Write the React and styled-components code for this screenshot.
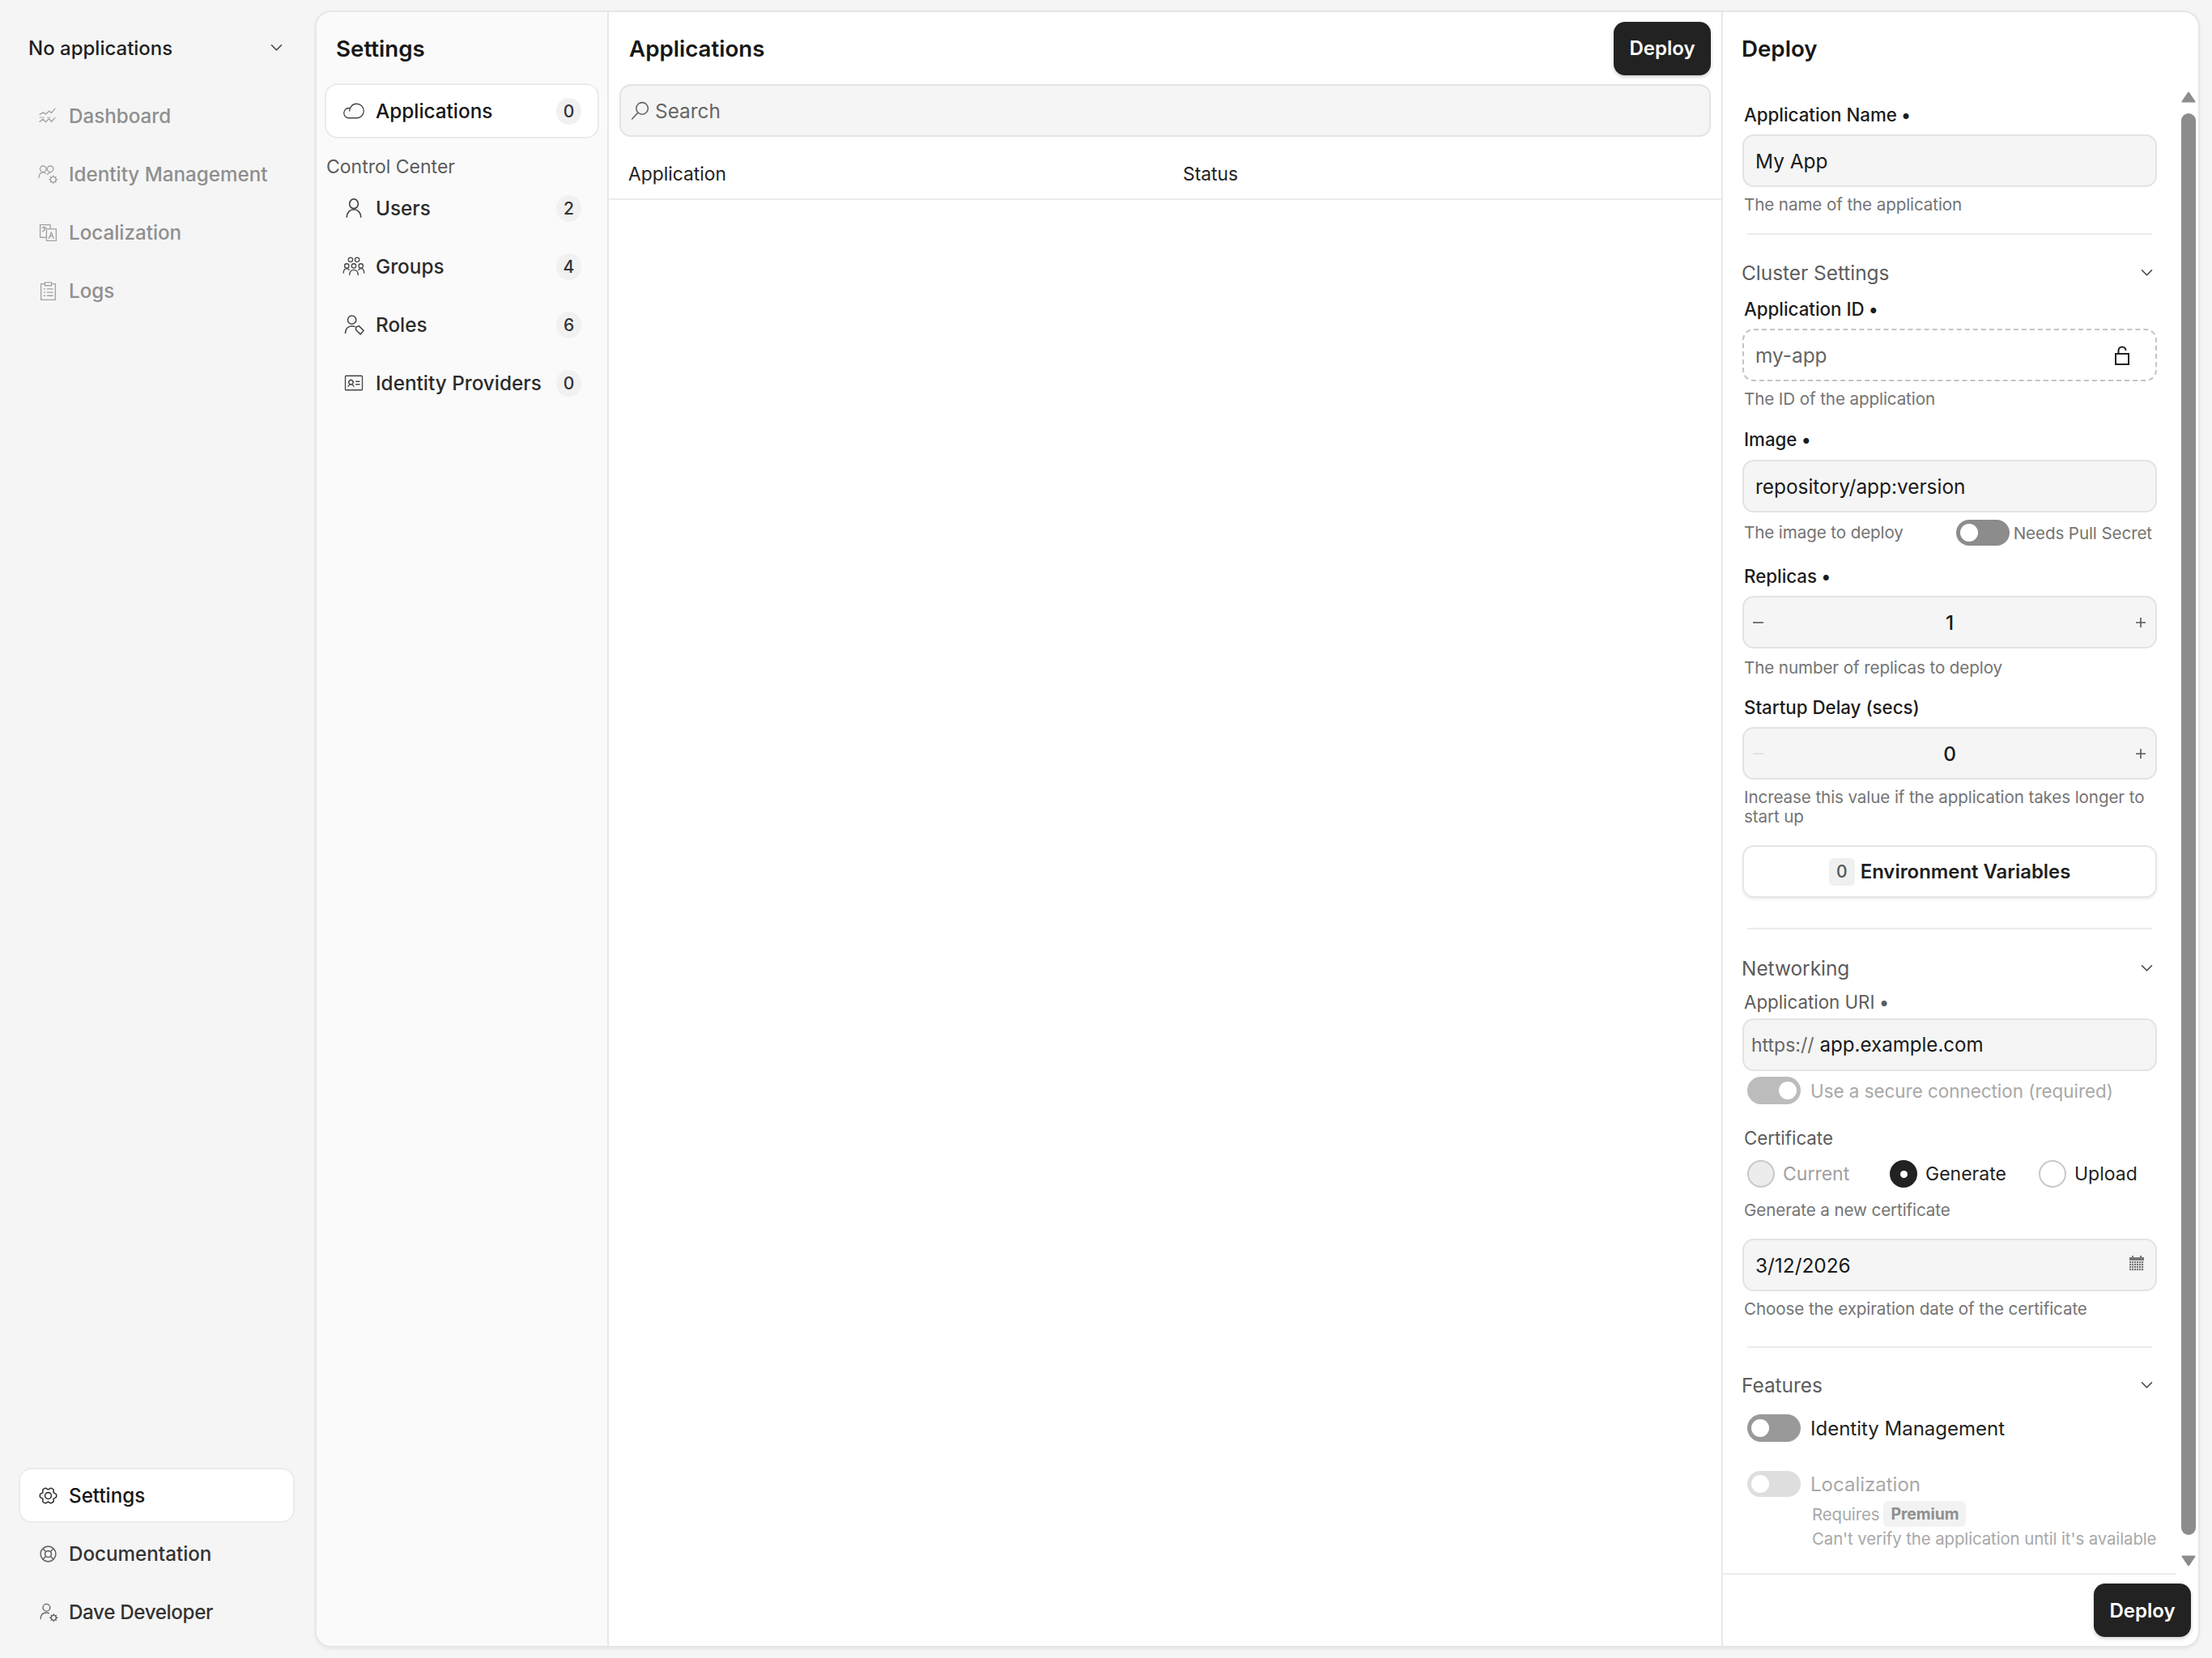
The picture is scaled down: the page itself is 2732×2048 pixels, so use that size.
import React from 'react';
import styled, { createGlobalStyle } from 'styled-components';
import {
  PiCloudLight, PiIdentificationCardLight, PiGearSix, PiLifebuoy,
} from 'react-icons/pi';

const GlobalStyle = createGlobalStyle`
  * { box-sizing: border-box; }
  html, body { margin: 0; padding: 0; background: #f5f5f5; }
  body { font-family: Inter, "Liberation Sans", sans-serif; color: #1f1f1f; }
`;

const Page = styled.div`
  display: flex;
  width: 2732px;
  height: 2048px;
  padding-right: 15px;
  background: #f5f5f5;
`;

const Sidebar = styled.aside`
  width: 389px;
  flex: none;
  display: flex;
  flex-direction: column;
  padding: 13px 27px 25px 25px;
`;

const AppSelect = styled.div`
  height: 92px;
  display: flex;
  align-items: center;
  justify-content: space-between;
  padding: 0 13px 0 10px;
  font-size: 24px;
  font-weight: 500;
  margin-bottom: 6px;
  color: #1f1f1f;
`;

const NavList = styled.nav`
  display: flex;
  flex-direction: column;
  gap: 8px;
`;

const NavItem = styled.div`
  height: 64px;
  display: flex;
  align-items: center;
  gap: 13px;
  padding-left: 22px;
  font-size: 24.2px;
  font-weight: 500;
  letter-spacing: ${(p) => p.$spacing || 0}px;
  border-radius: 14px;
  color: ${(p) => (p.$dim ? '#8f8f8f' : p.$active ? '#161616' : '#333')};
  background: ${(p) => (p.$active ? '#fff' : 'transparent')};
  box-shadow: ${(p) => (p.$active ? '0 0 0 2px #ebebeb' : 'none')};
  svg { flex: none; width: 25px; height: 25px; color: ${(p) => (p.$dim ? '#a3a3a3' : p.$active ? '#333' : '#666')}; }
`;

const Spacer = styled.div`
  flex: 1;
`;

const Panel = styled.main`
  flex: 1;
  display: flex;
  margin: 13px 0;
  min-width: 0;
  background: #fff;
  border: 2px solid #e6e6e6;
  border-radius: 20px;
  overflow: hidden;
  box-shadow: 0 2px 4px rgba(0, 0, 0, 0.06);
`;

const SettingsColumn = styled.section`
  width: 361px;
  flex: none;
  background: #fafafa;
  border-right: 2px solid #e8e8e8;
  padding: 0 12px;
`;

const PanelTitle = styled.h2`
  margin: 0;
  font-size: 27.7px;
  font-weight: 600;
  color: #171717;
`;

const SettingsHead = styled.div`
  height: 90px;
  display: flex;
  align-items: center;
  padding-left: 12px;
`;

const SettingsItem = styled.div`
  height: 64px;
  display: flex;
  align-items: center;
  padding: 0 20px;
  border-radius: 14px;
  font-size: 24.3px;
  font-weight: 500;
  color: ${(p) => (p.$active ? '#161616' : '#2b2b2b')};
  background: ${(p) => (p.$active ? '#fff' : 'transparent')};
  box-shadow: ${(p) => (p.$active ? '0 0 0 2px #ebebeb' : 'none')};
  margin-bottom: 8px;
  svg { flex: none; width: 28px; height: 28px; margin-right: 13px; color: #444; }
  span:first-of-type { flex: 1; white-space: nowrap; }
`;

const CountBadge = styled.span`
  flex: none;
  width: 31px;
  height: 33px;
  border-radius: 50%;
  background: #f1f1f1;
  display: flex;
  align-items: center;
  justify-content: center;
  font-size: 21px;
  font-weight: 500;
  color: #333;
`;

const GroupLabel = styled.div`
  height: 30px;
  margin: 22px 0 4px;
  font-size: 23px;
  line-height: 30px;
  color: #5c5c5c;
`;

const Content = styled.section`
  flex: 1;
  min-width: 0;
  display: flex;
  flex-direction: column;
`;

const ContentHead = styled.div`
  height: 89px;
  display: flex;
  align-items: center;
  justify-content: space-between;
  padding: 0 13px 0 25px;
`;

const DarkButton = styled.button`
  width: 120px;
  height: 66px;
  border: 0;
  border-radius: 14px;
  background: #222;
  color: #fff;
  font: 600 24px Inter, "Liberation Sans", sans-serif;
  box-shadow: 0 2px 4px rgba(0, 0, 0, 0.2);
`;

const SearchBar = styled.div`
  height: 65px;
  margin: 0 13px;
  display: flex;
  align-items: center;
  gap: 6px;
  padding-left: 11px;
  background: #f5f5f5;
  border: 2px solid #e3e3e3;
  border-radius: 14px;
  font-size: 24.4px;
  color: #666;
  svg { width: 25px; height: 25px; }
`;

const TableHead = styled.div`
  height: 66px;
  margin-top: 12px;
  display: grid;
  grid-template-columns: 685px 1fr;
  align-items: center;
  padding: 2px 24px 0;
  border-bottom: 2px solid #ececec;
  font-size: 22.8px;
  color: #222;
`;

const DeployPanel = styled.section`
  width: 589px;
  flex: none;
  display: flex;
  flex-direction: column;
  border-left: 2px solid #e8e8e8;
`;

const DeployHead = styled.div`
  height: 90px;
  display: flex;
  align-items: center;
  padding-left: 23px;
`;

const DeployBody = styled.div`
  height: 840px;
  flex: 1;
  display: flex;
  min-height: 0;
`;

const Form = styled.div`
  flex: 1;
  min-width: 0;
  padding: 0 24px;
  border-bottom: 2px solid #ececec;
`;

const ScrollTrack = styled.div`
  width: 18px;
  flex: none;
  margin: 0 3px 0 6px;
  padding: 8px 0 10px;
  display: flex;
  flex-direction: column;
  align-items: stretch;
  svg { display: block; width: 18px; height: 14px; flex: none; }
`;

const ScrollThumb = styled.div`
  flex: 1;
  margin: 13px 0 25px;
  border-radius: 9px;
  background: #8c8c8c;
`;

const DeployFoot = styled.div`
  height: 88px;
  flex: none;
  display: flex;
  align-items: center;
  justify-content: flex-end;
  padding-right: 9px;
`;

const Label = styled.div`
  height: 32px;
  line-height: 32px;
  margin: ${(p) => p.$top || 0}px 0 ${(p) => p.$bottom ?? 8}px 2px;
  font-size: 22.3px;
  font-weight: ${(p) => (p.$muted ? 400 : 500)};
  white-space: nowrap;
  color: ${(p) => (p.$muted ? '#5c5c5c' : '#1c1c1c')};
  b { font-weight: 700; }
`;

const InputBox = styled.div`
  height: 65px;
  display: flex;
  align-items: center;
  justify-content: space-between;
  padding: 0 14px;
  border-radius: 14px;
  background: ${(p) => (p.$locked ? '#fff' : '#f5f5f5')};
  border: 2px ${(p) => (p.$locked ? 'dashed #c4c4c4' : 'solid #e3e3e3')};
  font-size: 24.4px;
  color: ${(p) => (p.$locked ? '#666' : '#1a1a1a')};
  margin-top: ${(p) => p.$top || 0}px;
`;

const Help = styled.div`
  margin: ${(p) => p.$top ?? 9}px 0 0 2px;
  font-size: 20.6px;
  letter-spacing: -0.1px;
  line-height: ${(p) => p.$line || 26}px;
  color: #747474;
`;

const Divider = styled.hr`
  border: 0;
  height: 2px;
  background: #ececec;
  margin: ${(p) => p.$top}px 6px 0;
`;

const SectionHead = styled.div`
  height: 34px;
  margin: ${(p) => p.$top}px 0 0 -1px;
  display: flex;
  align-items: center;
  justify-content: space-between;
  padding-right: 5px;
  font-size: 24.4px;
  color: #5c5c5c;
`;

const HelpRow = styled.div`
  height: 32px;
  margin-top: 9px;
  display: flex;
  align-items: center;
  justify-content: space-between;
  padding-right: 6px;
  ${Help} { margin-top: 0; }
`;

const ToggleGroup = styled.div`
  display: flex;
  align-items: center;
  gap: 5px;
  font-size: 20.6px;
  letter-spacing: -0.1px;
  color: #747474;
`;

const Track = styled.div`
  width: 66px;
  height: ${(p) => p.$h || 34}px;
  flex: none;
  display: flex;
  align-items: center;
  justify-content: ${(p) => (p.$on ? 'flex-end' : 'flex-start')};
  padding: 0 5px;
  border-radius: 17px;
  background: ${(p) => p.$color};
  &::after {
    content: '';
    width: 22px;
    height: 22px;
    border-radius: 50%;
    background: #fff;
  }
`;

const SwitchRow = styled.div`
  margin: ${(p) => p.$top}px 0 0 6px;
  display: flex;
  align-items: center;
  gap: 12px;
  font-size: ${(p) => p.$size || 24}px;
  color: ${(p) => (p.$disabled ? '#a8a8a8' : '#1f1f1f')};
`;

const Stepper = styled(InputBox)`
  display: grid;
  grid-template-columns: 1fr auto 1fr;
  padding: 0 10px;
  svg { width: 16px; height: 16px; }
  svg:first-child { justify-self: start; }
  svg:last-child { justify-self: end; }
  span { font-weight: 500; }
`;

const EnvButton = styled.div`
  height: 65px;
  margin-top: 23px;
  display: flex;
  align-items: center;
  justify-content: center;
  gap: 7px;
  border: 2px solid #e6e6e6;
  border-radius: 14px;
  font-size: 23.9px;
  font-weight: 600;
  box-shadow: 0 2px 3px rgba(0, 0, 0, 0.07);
`;

const EnvCount = styled.span`
  width: 32px;
  height: 34px;
  display: flex;
  align-items: center;
  justify-content: center;
  border-radius: 6px;
  background: #f0f0f0;
  color: #555;
  font-size: 21px;
  font-weight: 500;
`;

const UriBox = styled(InputBox)`
  justify-content: flex-start;
  gap: 7px;
  padding-left: 9px;
  font-size: 24.1px;
`;

const UriScheme = styled.span`
  font-size: 23px;
  color: #666;
`;

const RadioRow = styled.div`
  height: 34px;
  margin: 11px 0 0 6px;
  display: flex;
  align-items: center;
`;

const RadioOption = styled.div`
  width: ${(p) => p.$w}px;
  flex: none;
  display: flex;
  align-items: center;
  gap: 10px;
  font-size: 23px;
  color: ${(p) => (p.$disabled ? '#a0a0a0' : '#1f1f1f')};
`;

const RadioDot = styled.span`
  width: 34px;
  height: 34px;
  flex: none;
  border-radius: 50%;
  display: flex;
  align-items: center;
  justify-content: center;
  border: 2px solid ${(p) => (p.$checked ? '#222' : '#c9c9c9')};
  background: ${(p) => (p.$checked ? '#222' : p.$disabled ? '#ececec' : '#fff')};
  &::after {
    content: '';
    display: ${(p) => (p.$checked ? 'block' : 'none')};
    width: 9px;
    height: 9px;
    border-radius: 50%;
    background: #fff;
  }
`;

const FeatureNote = styled.div`
  margin: ${(p) => p.$top}px 0 0 86px;
  height: ${(p) => p.$h}px;
  display: flex;
  align-items: center;
  gap: 5px;
  font-size: 20.4px;
  letter-spacing: -0.1px;
  color: #a8a8a8;
  white-space: nowrap;
`;

const PremiumTag = styled.span`
  height: 32px;
  padding: 0 9px;
  display: flex;
  align-items: center;
  border-radius: 6px;
  background: #f2f2f2;
  color: #8f8f8f;
  font-size: 19.5px;
  font-weight: 700;
`;

const LineIcon = ({ children, sw = 1.3 }) => (
  <svg viewBox="0 0 24 24" fill="none" stroke="currentColor" strokeWidth={sw} strokeLinecap="round" strokeLinejoin="round">
    {children}
  </svg>
);

const Chevron = () => (
  <svg width="15" height="10" viewBox="0 0 15 10" fill="none" stroke="#444" strokeWidth="1.6" strokeLinecap="round" strokeLinejoin="round">
    <path d="M1.5 1.8l6 6 6-6" />
  </svg>
);

const DashboardIcon = () => (
  <LineIcon>
    <path d="M2 10l4-2.5 3 2 4-3.5 3 2 4-5" />
    <path d="M2 13.5h5M11 13.5h3" opacity=".7" />
    <path d="M2 18.5l4-3 3 3.5 4-4 3 3.5 4-4.5" />
  </LineIcon>
);

const GearBit = ({ x, y, r = 3 }) => (
  <g>
    <circle cx={x} cy={y} r={r} />
    <path d={`M${x} ${y - r - 1.4}v1.4M${x} ${y + r}v1.4M${x - r - 1.4} ${y}h1.4M${x + r} ${y}h1.4M${x - r} ${y - r}l1 1M${x + r} ${y + r}l-1-1M${x - r} ${y + r}l1-1M${x + r} ${y - r}l-1 1`} />
  </g>
);

const IdentityIcon = () => (
  <LineIcon>
    <circle cx="6" cy="5.5" r="3.6" />
    <path d="M0.8 16c.3-3.8 2.3-6.5 5.2-6.5 1.2 0 2.2.4 3 1.2" />
    <circle cx="14.5" cy="5.5" r="3.6" />
    <path d="M11 12c.8-1.5 2-2.4 3.5-2.5" />
    <GearBit x={18} y={18} r={3.2} />
  </LineIcon>
);

const UserGearIcon = () => (
  <LineIcon>
    <circle cx="10" cy="6.5" r="4.2" />
    <path d="M3 20c.2-4.6 2.8-7.5 7-7.5 1.2 0 2.2.2 3 .7" />
    <GearBit x={18.5} y={18.5} r={3} />
  </LineIcon>
);

const TranslateIcon = () => (
  <LineIcon>
    <path d="M2.5 2.5h12v15h-12z" />
    <path d="M10 7.5h11.5v14H10z" fill="#f5f5f5" />
    <path d="M13 18.5l2.7-7 2.7 7M14 16h3.4" />
    <path d="M5 6h4.5M7.5 5v1M8.5 6c-.4 2-1.4 3.6-3 4.5" />
  </LineIcon>
);

const LogsIcon = () => (
  <LineIcon>
    <path d="M8 3.5H3.5v19h17v-19H16" />
    <path d="M8 1.8h8v3.7H8z" />
    <path d="M7 9.5h1.2M11 9.5h6.5M7 13.5h1.2M11 13.5h6.5M7 17.5h1.2M11 17.5h6.5" />
  </LineIcon>
);

const UserIcon = () => (
  <LineIcon sw={1.4}>
    <ellipse cx="12" cy="7.5" rx="4.6" ry="5" />
    <path d="M4.5 21.5c.2-4.8 3.3-8 7.5-8s7.300 3.200 7.500 8" />
  </LineIcon>
);

const GroupsIcon = () => (
  <LineIcon sw={1.1}>
    <circle cx="8.5" cy="5" r="2.3" />
    <circle cx="15.5" cy="5" r="2.3" />
    <circle cx="4.5" cy="11.5" r="2.3" />
    <circle cx="12" cy="11.5" r="2.3" />
    <circle cx="19.5" cy="11.5" r="2.3" />
    <path d="M1 19c.2-2.8 1.6-4.8 3.5-4.8 1.1 0 2 .6 2.6 1.7" />
    <path d="M7.5 21c.2-3 2-5.2 4.5-5.2s4.3 2.2 4.5 5.2" />
    <path d="M23 19c-.2-2.8-1.6-4.8-3.5-4.8-1.1 0-2 .6-2.6 1.7" />
  </LineIcon>
);

const RolesIcon = () => (
  <LineIcon>
    <circle cx="10" cy="7" r="4.4" />
    <path d="M3 21c.2-4.5 3-7.6 7-7.6 1 0 2 .2 2.8.6" />
    <path d="M14.2 14.6l3.2-1.2 5 4.8-3.4 4-4.8-4.6z" />
  </LineIcon>
);

const SearchIcon = () => (
  <svg viewBox="0 0 24 24" fill="none" stroke="currentColor" strokeWidth="1.5" strokeLinecap="round">
    <circle cx="14.5" cy="9.5" r="7" />
    <path d="M9.5 14.5L2.5 22" />
  </svg>
);

const LockIcon = () => (
  <svg width="20" height="24" viewBox="0 0 20 24" fill="none" stroke="#222" strokeWidth="2" style={{ marginRight: 17 }}>
    <rect x="2" y="10" width="16" height="13" />
    <path d="M5.5 10V6a4.5 4.5 0 0 1 9 0" />
  </svg>
);

const CalendarIcon = () => (
  <svg width="18" height="20" viewBox="0 0 18 20" fill="#777" style={{ marginBottom: 4 }}>
    <rect x="0" y="2" width="18" height="4" />
    <rect x="3" y="0" width="2" height="3" />
    <rect x="13" y="0" width="2" height="3" />
    {[7, 10, 13, 16].map((y) =>
      [0, 3, 6, 9, 12, 15].map((x) => <rect key={`${x}-${y}`} x={x} y={y} width="2.2" height="2.2" />),
    )}
  </svg>
);

const Minus = ({ dim }) => (
  <svg viewBox="0 0 16 16" stroke={dim ? '#dcdcdc' : '#555'} strokeWidth="1.6"><path d="M1 8h13" /></svg>
);

const Plus = () => (
  <svg viewBox="0 0 16 16" stroke="#555" strokeWidth="1.6"><path d="M2 8h12M8 2v12" /></svg>
);

const Arrow = ({ down }) => (
  <svg viewBox="0 0 18 14" fill="#8c8c8c" stroke="#8c8c8c" strokeWidth="2" strokeLinejoin="round">
    <path d={down ? 'M1.5 1.5h15L9 12.5z' : 'M9 1.5l7.5 11h-15z'} />
  </svg>
);

const mainNav = [
  { label: 'Dashboard', icon: <DashboardIcon /> },
  { label: 'Identity Management', icon: <IdentityIcon /> },
  { label: 'Localization', icon: <TranslateIcon /> },
  { label: 'Logs', icon: <LogsIcon /> },
];

const controlCenter = [
  { label: 'Users', count: 2, icon: <UserIcon /> },
  { label: 'Groups', count: 4, icon: <GroupsIcon /> },
  { label: 'Roles', count: 6, icon: <RolesIcon /> },
  { label: 'Identity Providers', count: 0, icon: <PiIdentificationCardLight /> },
];

export default function App() {
  return (
    <Page>
      <GlobalStyle />
      <Sidebar>
        <AppSelect>
          No applications
          <Chevron />
        </AppSelect>
        <NavList>
          {mainNav.map((item) => (
            <NavItem $dim key={item.label}>{item.icon}{item.label}</NavItem>
          ))}
        </NavList>
        <Spacer />
        <NavList>
          <NavItem $active><PiGearSix />Settings</NavItem>
          <NavItem><PiLifebuoy />Documentation</NavItem>
          <NavItem $spacing={-0.35}><UserGearIcon />Dave Developer</NavItem>
        </NavList>
      </Sidebar>

      <Panel>
        <SettingsColumn>
          <SettingsHead><PanelTitle>Settings</PanelTitle></SettingsHead>
          <SettingsItem $active>
            <PiCloudLight />
            <span>Applications</span>
            <CountBadge>0</CountBadge>
          </SettingsItem>
          <GroupLabel>Control Center</GroupLabel>
          {controlCenter.map((item) => (
            <SettingsItem key={item.label}>
              {item.icon}
              <span>{item.label}</span>
              <CountBadge>{item.count}</CountBadge>
            </SettingsItem>
          ))}
        </SettingsColumn>

        <Content>
          <ContentHead>
            <PanelTitle>Applications</PanelTitle>
            <DarkButton>Deploy</DarkButton>
          </ContentHead>
          <SearchBar><SearchIcon />Search</SearchBar>
          <TableHead>
            <span>Application</span>
            <span>Status</span>
          </TableHead>
        </Content>

        <DeployPanel>
          <DeployHead><PanelTitle>Deploy</PanelTitle></DeployHead>
          <DeployBody>
            <Form>
              <Label $top={21}>Application Name <b>•</b></Label>
              <InputBox>My App</InputBox>
              <Help>The name of the application</Help>
              <Divider $top={22} />

              <SectionHead $top={30}>Cluster Settings<Chevron /></SectionHead>
              <Label $top={12}>Application ID <b>•</b></Label>
              <InputBox $locked>my-app<LockIcon /></InputBox>
              <Help>The ID of the application</Help>

              <Label $top={21} $bottom={9}>Image <b>•</b></Label>
              <InputBox>repository/app:version</InputBox>
              <HelpRow>
                <Help>The image to deploy</Help>
                <ToggleGroup><Track $color="#8c8c8c" $h={32} />Needs Pull Secret</ToggleGroup>
              </HelpRow>

              <Label $top={22}>Replicas <b>•</b></Label>
              <Stepper><Minus /><span>1</span><Plus /></Stepper>
              <Help $top={11}>The number of replicas to deploy</Help>

              <Label $top={20}>Startup Delay (secs)</Label>
              <Stepper><Minus dim /><span>0</span><Plus /></Stepper>
              <Help $top={10} $line={24}>Increase this value if the application takes longer to start up</Help>

              <EnvButton><EnvCount>0</EnvCount>Environment Variables</EnvButton>
              <Divider $top={37} />

              <SectionHead $top={31}>Networking<Chevron /></SectionHead>
              <Label $top={9} $bottom={4} $muted>Application URI <b>•</b></Label>
              <UriBox><UriScheme>https://</UriScheme><span>app.example.com</span></UriBox>
              <SwitchRow $top={7} $disabled $size={22.4}><Track $on $color="#bcbcbc" />Use a secure connection (required)</SwitchRow>

              <Label $top={26} $bottom={0} $muted>Certificate</Label>
              <RadioRow>
                <RadioOption $w={176} $disabled><RadioDot $disabled />Current</RadioOption>
                <RadioOption $w={184}><RadioDot $checked />Generate</RadioOption>
                <RadioOption $w={140}><RadioDot />Upload</RadioOption>
              </RadioRow>
              <Help $top={15}>Generate a new certificate</Help>
              <InputBox $top={22}>3/12/2026<CalendarIcon /></InputBox>
              <Help>Choose the expiration date of the certificate</Help>
              <Divider $top={33} />

              <SectionHead $top={29}>Features<Chevron /></SectionHead>
              <SwitchRow $top={19}><Track $color="#999" />Identity Management</SwitchRow>
              <SwitchRow $top={36} $disabled><Track $color="#dedede" $h={32} />Localization</SwitchRow>
              <FeatureNote $top={7} $h={28}>Requires <PremiumTag>Premium</PremiumTag></FeatureNote>
              <FeatureNote $top={3} $h={26}>Can't verify the application until it's available</FeatureNote>
            </Form>
            <ScrollTrack>
              <Arrow />
              <ScrollThumb />
              <Arrow down />
            </ScrollTrack>
          </DeployBody>
          <DeployFoot><DarkButton>Deploy</DarkButton></DeployFoot>
        </DeployPanel>
      </Panel>
    </Page>
  );
}
